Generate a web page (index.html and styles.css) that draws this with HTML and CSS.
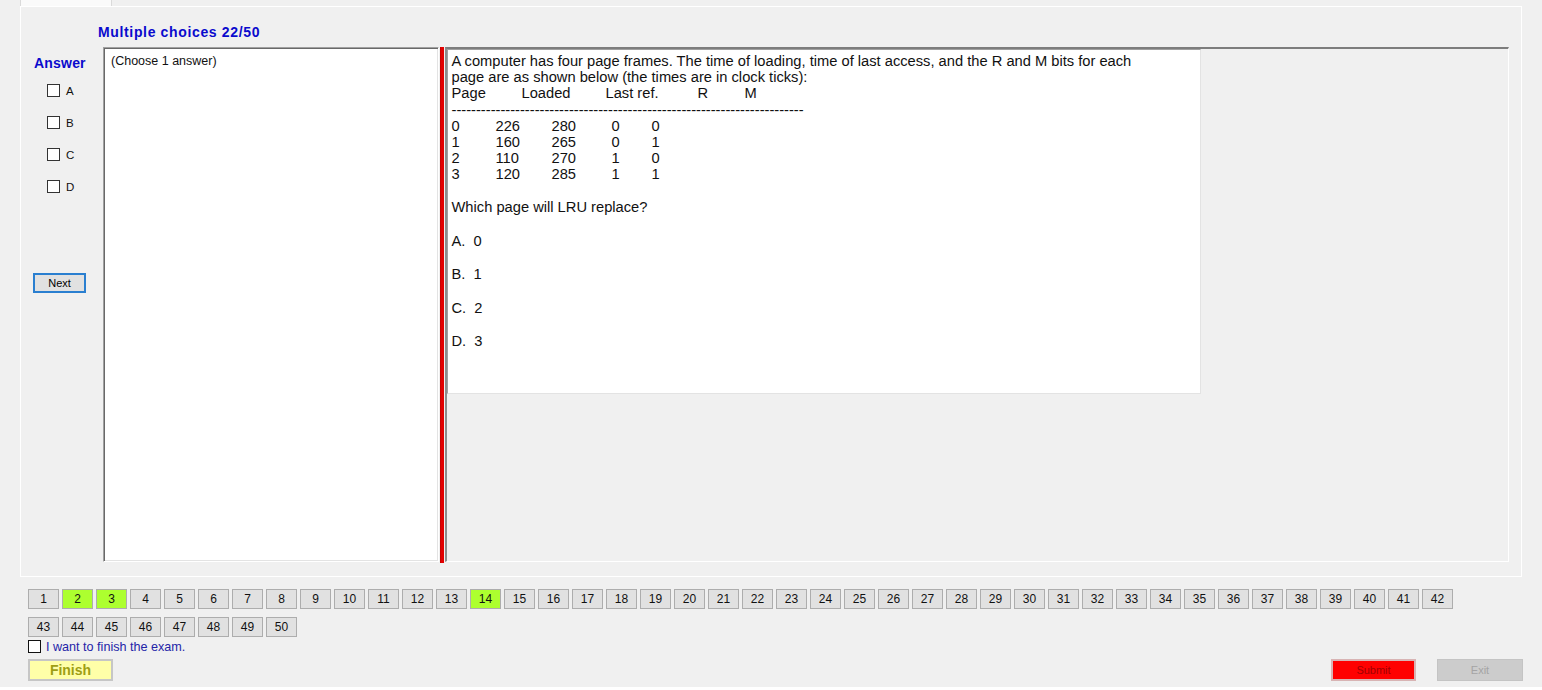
FILE: index.html
```html
<!DOCTYPE html>
<html>
<head>
<meta charset="utf-8">
<title>Exam</title>
<link rel="stylesheet" href="styles.css">
</head>
<body>
<div class="app">
  <div class="tabs"><div class="tab"></div></div>
  <div class="page">
    <div class="title">Multiple choices 22/50</div>
    <div class="main">
      <div class="answer-col">
        <div class="answer-h">Answer</div>
        <div class="opts">
          <div class="opt"><span class="cb"></span>A</div>
          <div class="opt"><span class="cb"></span>B</div>
          <div class="opt"><span class="cb"></span>C</div>
          <div class="opt"><span class="cb"></span>D</div>
        </div>
        <button class="next">Next</button>
      </div>
      <div class="choice-box">(Choose 1 answer)</div>
      <div class="splitter"><div class="bar"></div></div>
      <div class="qpanel">
        <div class="qtext">
          <div class="ln">A computer has four page frames. The time of loading, time of last access, and the R and M bits for each</div>
          <div class="ln">page are as shown below (the times are in clock ticks):</div>
          <div class="ln hdr"><span class="h1">Page</span><span class="h2">Loaded</span><span class="h3">Last ref.</span><span class="h4">R</span><span>M</span></div>
          <div class="dash">------------------------------------------------------------------------</div>
          <div class="row"><span class="c1">0</span><span class="c2">226</span><span class="c3">280</span><span class="c4">0</span><span>0</span></div>
          <div class="row"><span class="c1">1</span><span class="c2">160</span><span class="c3">265</span><span class="c4">0</span><span>1</span></div>
          <div class="row"><span class="c1">2</span><span class="c2">110</span><span class="c3">270</span><span class="c4">1</span><span>0</span></div>
          <div class="row"><span class="c1">3</span><span class="c2">120</span><span class="c3">285</span><span class="c4">1</span><span>1</span></div>
          <div class="para">Which page will LRU replace?</div>
          <div class="para">A.  0</div>
          <div class="para">B.  1</div>
          <div class="para">C.  2</div>
          <div class="para">D.  3</div>
        </div>
      </div>
    </div>
  </div>
  <div class="bottom">
    <div class="nums">
      <span class="num">1</span><span class="num done">2</span><span class="num done">3</span><span class="num">4</span><span class="num">5</span><span class="num">6</span><span class="num">7</span><span class="num">8</span><span class="num">9</span><span class="num">10</span>
      <span class="num">11</span><span class="num">12</span><span class="num">13</span><span class="num done">14</span><span class="num">15</span><span class="num">16</span><span class="num">17</span><span class="num">18</span><span class="num">19</span><span class="num">20</span>
      <span class="num">21</span><span class="num">22</span><span class="num">23</span><span class="num">24</span><span class="num">25</span><span class="num">26</span><span class="num">27</span><span class="num">28</span><span class="num">29</span><span class="num">30</span>
      <span class="num">31</span><span class="num">32</span><span class="num">33</span><span class="num">34</span><span class="num">35</span><span class="num">36</span><span class="num">37</span><span class="num">38</span><span class="num">39</span><span class="num">40</span>
      <span class="num">41</span><span class="num">42</span><span class="num">43</span><span class="num">44</span><span class="num">45</span><span class="num">46</span><span class="num">47</span><span class="num">48</span><span class="num">49</span><span class="num">50</span>
    </div>
    <div class="finish-check"><span class="cb cb-dark"></span>I want to finish the exam.</div>
    <div class="actions">
      <button class="finish">Finish</button>
      <div class="right-btns">
        <button class="submit">Submit</button>
        <button class="exit">Exit</button>
      </div>
    </div>
  </div>
</div>
</body>
</html>
```
FILE: styles.css
```css
* { box-sizing: border-box; }
html, body { margin: 0; padding: 0; }
body {
  background: #fff;
  width: 1542px;
  height: 690px;
  overflow: hidden;
  font-family: "Liberation Sans", Arial, sans-serif;
  color: #000;
}
button { font-family: "Liberation Sans", Arial, sans-serif; padding: 0; margin: 0; cursor: default; }
.app { height: 687px; background: #f0f0f0; overflow: hidden; }
.tabs { height: 6px; padding-left: 20px; display: flex; }
.tab {
  width: 92px; height: 6px; background: #fafafa;
  border-left: 1px solid #dadada; border-right: 1px solid #dadada;
}
.page {
  margin-left: 20px;
  width: 1502px;
  height: 571px;
  border: 1px solid #fff;
  padding-right: 12px;
}
.title {
  height: 40px;
  padding: 17px 0 0 77px;
  font-weight: bold;
  font-size: 14px;
  line-height: 16px;
  color: #0a0acd;
  letter-spacing: 0.65px;
}
.main { display: flex; align-items: flex-start; height: 516px; }
.answer-col { width: 82px; flex: none; }
.answer-h {
  margin: 8px 0 0 13px;
  font-weight: bold; font-size: 14px; line-height: 16px;
  color: #0a0acd; letter-spacing: 0.2px;
}
.opts { margin: 13px 0 0 26px; display: flex; flex-direction: column; gap: 19px; }
.opt { display: flex; align-items: center; height: 13px; font-size: 11.5px; gap: 6px; color: #111; }
.cb { display: block; flex: none; width: 13px; height: 13px; border: 1px solid #333; background: #fff; }
.next {
  display: block;
  margin: 80px 0 0 12px;
  width: 53px; height: 20px;
  border: 2px solid #2a7fd0;
  background: #e1e1e1;
  font-size: 11px; color: #000;
}
.choice-box {
  flex: none;
  width: 336px; height: 515px;
  background: #fff;
  border: 1px solid; border-color: #a0a0a0 #fff #fff #a0a0a0;
  box-shadow: inset 1px 1px 0 #696969, inset -1px -1px 0 #e3e3e3;
  padding: 6px 0 0 7px;
  font-size: 12.5px; line-height: 14px; color: #111;
}
.splitter { flex: none; width: 6px; padding: 0 1px; }
.bar { height: 516px; background: #e20000; border-left: 1px solid #c80000; }
.qpanel {
  flex: 1;
  height: 515px;
  border-style: solid; border-width: 2px 1px 1px 2px;
  border-color: #7d7d7d #fff #fff #8c8c8c;
}
.qtext {
  width: 754px; height: 345px;
  background: #fff;
  border: 1px solid; border-color: #a0a0a0 #e3e3e3 #e3e3e3 #a0a0a0;
  padding: 2.5px 0 0 3.5px;
  font-size: 14.7px; color: #111;
  overflow: hidden;
}
.ln { line-height: 16.3px; white-space: nowrap; }
.hdr { display: flex; }
.h1 { width: 70px; }
.h2 { width: 84px; }
.h3 { width: 92px; }
.h4 { width: 47px; }
.dash { line-height: 12px; padding: 3px 0 1.5px; white-space: nowrap; }
.row { display: flex; line-height: 16.1px; }
.c1 { width: 44px; }
.c2 { width: 56px; }
.c3 { width: 60px; }
.c4 { width: 40px; }
.para { line-height: 16.8px; margin-top: 16.8px; white-space: pre; }
.bottom { padding: 12px 0 0 28px; }
.nums { display: flex; flex-wrap: wrap; width: 1430px; gap: 8px 3px; }
.num {
  width: 31px; height: 20px;
  border: 1px solid #adadad; background: #e1e1e1;
  display: flex; align-items: center; justify-content: center;
  font-size: 12px; color: #111;
}
.num.done { background: #adff2f; }
.finish-check {
  margin-top: 3px; height: 13px;
  display: flex; align-items: center; gap: 5px;
  font-size: 12.6px; color: #2424a8;
}
.cb-dark { border-color: #111; }
.actions {
  margin-top: 6px;
  display: flex; justify-content: space-between; align-items: center;
  padding-right: 19px;
}
.finish {
  width: 85px; height: 22px;
  border: 2px solid #c6c6c6; background: #ffffa8;
  font-weight: bold; font-size: 14px; color: #9e9e14;
}
.right-btns { display: flex; gap: 21px; align-items: center; }
.submit {
  width: 85px; height: 22px;
  border: 2px solid #d8b4b4; background: #ff0000;
  font-size: 11px; color: #a00000;
}
.exit {
  width: 86px; height: 22px;
  border: 1px solid #c4c4c4; background: #cccccc;
  font-size: 11px; color: #a4a4a4;
}
```
